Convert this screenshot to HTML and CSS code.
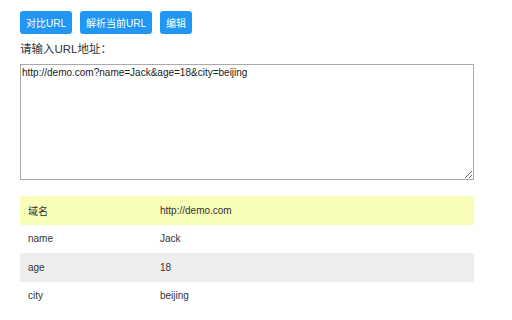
FILE: index.html
```html
<!DOCTYPE html>
<html lang="zh-CN">
<head>
    <meta charset="UTF-8">
    <meta name="viewport" content="width=device-width, initial-scale=1.0">
    <title>URL解析</title>
    <link rel="stylesheet" href="styles.css">
</head>
<body>
    <div class="wrap">
        <div class="button-container">
            <button class="button">对比URL</button>
            <button class="button">解析当前URL</button>
            <button class="button">编辑</button>
        </div>
        <div class="label">请输入URL地址：</div>
        <textarea class="url-input">http://demo.com?name=Jack&amp;age=18&amp;city=beijing</textarea>
        <table class="result">
            <tr class="host"><td class="key">域名</td><td>http://demo.com</td></tr>
            <tr><td class="key">name</td><td>Jack</td></tr>
            <tr class="even"><td class="key">age</td><td>18</td></tr>
            <tr><td class="key">city</td><td>beijing</td></tr>
        </table>
    </div>
</body>
</html>
```

FILE: styles.css
```css
body {
    font-family: "Liberation Sans", "Noto Sans CJK SC", sans-serif;
    margin: 0;
    padding: 0;
    background-color: #fff;
    color: #333;
}
.wrap {
    padding: 11px 20px 0 20px;
    width: 454px;
}
.button-container {
    display: flex;
    gap: 8px;
}
.button {
    height: 23px;
    padding: 0 6px;
    border: none;
    border-radius: 3px;
    background-color: #2196f3;
    color: white;
    font-family: inherit;
    font-size: 10px;
    cursor: pointer;
}
.label {
    margin-top: 8px;
    font-size: 11.5px;
    line-height: 15px;
    color: #333;
}
.url-input {
    display: block;
    box-sizing: border-box;
    margin-top: 7px;
    width: 454px;
    height: 116px;
    padding: 2px 1px;
    border: 1px solid #aaa;
    font-family: inherit;
    font-size: 10px;
    color: #222;
    resize: vertical;
}
.result {
    margin-top: 16px;
    width: 454px;
    border-collapse: collapse;
    font-size: 10px;
    color: #333;
}
.result td {
    height: 28.5px;
    padding: 0 8px;
}
.result td.key {
    width: 116px;
}
.result tr.host {
    background-color: #f8fdb9;
}
.result tr.even {
    background-color: #eee;
}
```
